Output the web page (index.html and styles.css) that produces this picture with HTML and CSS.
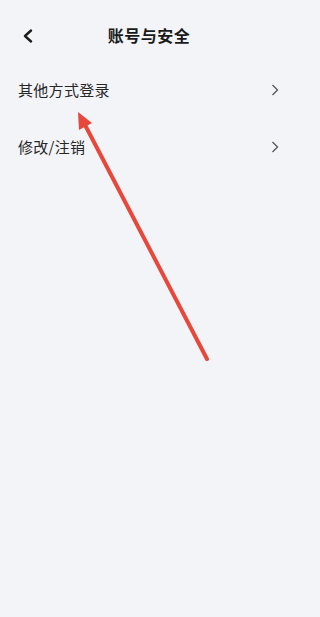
FILE: index.html
```html
<!DOCTYPE html>
<html lang="zh">
<head>
<meta charset="utf-8">
<link rel="stylesheet" href="styles.css">
</head>
<body>
<div class="page">
  <header class="header">
    <svg class="back" width="12" height="14" viewBox="0 0 12 14"><path d="M9 1.5 L3 7 L9 12.5" fill="none" stroke="#1c1c1c" stroke-width="2.4" stroke-linecap="round" stroke-linejoin="round"/></svg>
    <h1 class="title">账号与安全</h1>
  </header>
  <ul class="list">
    <li class="row"><span class="label">其他方式登录</span><svg class="chev" width="8" height="12" viewBox="0 0 8 12"><path d="M1.5 1 L6.5 6 L1.5 11" fill="none" stroke="#555" stroke-width="1.3"/></svg></li>
    <li class="row"><span class="label">修改/注销</span><svg class="chev" width="8" height="12" viewBox="0 0 8 12"><path d="M1.5 1 L6.5 6 L1.5 11" fill="none" stroke="#555" stroke-width="1.3"/></svg></li>
  </ul>
  <svg class="arrow" width="298" height="617" viewBox="0 0 298 617">
    <line x1="207" y1="359" x2="84" y2="123" stroke="#e8473b" stroke-width="4" stroke-linecap="round"/>
    <polygon points="78,112 92,123 79,130" fill="#e8473b"/>
  </svg>
</div>
</body>
</html>
```
FILE: styles.css
```css
html, body {
  margin: 0;
  padding: 0;
  background: #f3f4f8;
}
.page {
  position: relative;
  width: 298px;
  height: 617px;
  overflow: hidden;
  font-family: "Noto Sans CJK SC", "Noto Sans", sans-serif;
  color: #222;
}
.header {
  box-sizing: border-box;
  height: 61px;
  padding-top: 27px;
  display: flex;
  align-items: flex-start;
  justify-content: center;
  position: relative;
}
.back {
  position: absolute;
  left: 22px;
  top: 29px;
}
.title {
  margin: 0;
  font-size: 16px;
  font-weight: 700;
  letter-spacing: 0.5px;
  color: #1a1a1a;
  line-height: 16px;
}
.list {
  list-style: none;
  margin: 0;
  padding: 0;
}
.row {
  height: 57px;
  display: flex;
  align-items: center;
  justify-content: space-between;
  padding: 0 19px 0 18px;
}
.label {
  font-size: 15px;
  letter-spacing: 0.3px;
  color: #262626;
}
.chev {
  display: block;
}
.arrow {
  position: absolute;
  left: 0;
  top: 0;
  pointer-events: none;
}
```
